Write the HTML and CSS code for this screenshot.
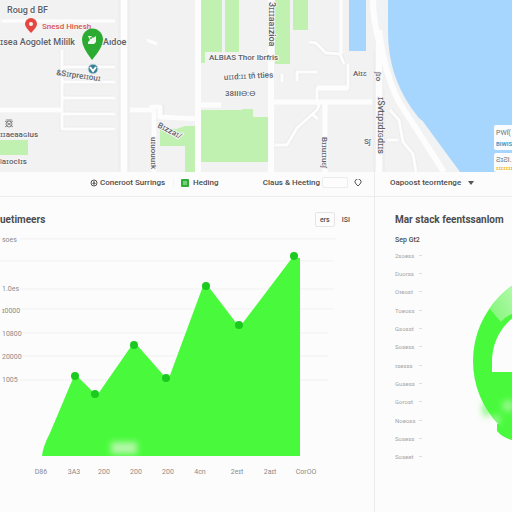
FILE: index.html
```html
<!DOCTYPE html>
<html lang="en">
<head>
<meta charset="utf-8">
<title>Dashboard</title>
<meta name="viewport" content="width=device-width, initial-scale=1">
<link rel="stylesheet" href="styles.css">
</head>
<body>
<div class="page">
  <section class="map" aria-label="Map">
    <svg class="map-canvas" viewBox="0 0 512 172" preserveAspectRatio="xMidYMid slice">
      <rect class="land" width="512" height="172"/>
      <g class="park">
        <path d="M201 0h21v52h-17v11h-4zM225 0h14v52h-14zM275 0h15v64h-15zM293 0h15v30h-15z"/>
        <path d="M201 110h40l2-1h10v8h15v45h-67zM160 127l16 2 9-3h10v46h-10v-26h-25z"/>
        <path d="M0 140h28v15H0z"/>
      </g>
      <g class="water">
        <path d="M349 0h17v51h-17z"/>
        <path d="M388 0H512V172H460L412 109Q388 75 388 32z"/>
      </g>
      <g class="casing">
        <path d="M62 50v79h53M62 67h53M62 82h53M62 98h53M62 114h53"/>
        <path d="M309 42l7 1 10 10 14 1 4 10M297 81v-9h20M340 88h8V64M317 105v-17h31M275 145h12l10-17 20-18 3-7M282 82v-8M313 115l5 4"/>
        <path d="M390 110l9 10 4 22 10 12 3 18M387 140h11"/>
        <path d="M0 110h62M132 110h21v-3h9v10l38 2M154 110v62"/>
      </g>
      <g class="road thin">
        <path d="M62 50v79h53M62 67h53M62 82h53M62 98h53M62 114h53M0 21h115M147 40l10 4"/>
        <path d="M309 42l7 1 10 10 14 1 4 10M297 81v-9h20M340 88h8V64M317 105v-17h31M275 145h12l10-17 20-18 3-7M282 82v-8M313 115l5 4M341 0v54"/>
        <path d="M390 110l9 10 4 22 10 12 3 18M387 140h11"/>
      </g>
      <g class="road mid">
        <path d="M0 110h62M130 110h22v-3h8v10l40 2M154 110v62M201 105h20M272 102h100M325 104v68M317 88h31"/>
      </g>
      <path class="road edge" d="M382 0q-2 50 10 82t28 42l35 48"/>
      <g class="road wide">
        <path d="M124 0v172M198 0v172M271 0v172"/>
        <path d="M373 0q0 20 6 42v130M379 30q5 42 20 72l45 70"/>
      </g>
      <path class="hairline" d="M119 0v172M129 0v172M374 50v122M384 90v82M0 21h2"/>
      <g class="map-text">
        <text x="7" y="13">Roug d BF</text>
        <text x="42" y="29" class="place">Snesd Hinesh</text>
        <text x="0" y="45">ɪsea Aogolet Mililk</text>
        <text x="103" y="45">Aıdoe</text>
        <text x="56" y="75" transform="rotate(8 56 75)" class="small">&amp;Sɪrpreɪɪouɪ</text>
        <text x="0" y="137" class="small">ɪɪaeaaɢius</text>
        <text x="0" y="164" class="small">ƖaɪocIɪs</text>
        <text x="209" y="60" class="small">ALBIAS Thor Ibrfris</text>
        <text x="224" y="80" class="small" transform="rotate(-3 224 80)">uɪɪd:ɪɪ tñ tties</text>
        <text x="225" y="96" class="small">38IIIƟ:Ɵ</text>
        <text x="157" y="127" class="small" transform="rotate(27 157 127)">Bɪzzaɪ/</text>
        <text x="353" y="76" class="small">Aƚɪɛ</text>
        <text x="364" y="144" class="small">Sʃ</text>
        <text x="151" y="137" class="small" transform="rotate(90 151 137)">uɪuouuɪk</text>
        <text x="269" y="2" transform="rotate(90 269 2)">3ɪɪɪaaɪzioa</text>
        <text x="322" y="137" class="small" transform="rotate(90 322 137)">Bɪɪuɪɪuɛʃ</text>
        <text x="376" y="72" class="small" transform="rotate(90 376 72)">ʃɪo</text>
        <text x="378" y="97" transform="rotate(90 378 97)">ɪSvtɪpɪdɪɢdɪɪs</text>
      </g>
      <g class="crest"><circle cx="9" cy="124" r="3"/><path d="M5 121l8 6M5 127l8-6M6 120h6"/></g>
      <path class="pin-red" d="M31 33q-6-6-6-9a6 6 0 0 1 12 0q0 3-6 9z"/>
      <circle class="pin-hole" cx="31" cy="24" r="2"/>
      <path class="pin-green" d="M92 60Q82 47 82 40a10 11 0 0 1 21 0Q103 47 92 60z"/>
      <path class="pin-mark" d="M88 36h3l2 2 3-2v6l-2 2h-6v-2l2-2z"/>
      <circle class="pin-dot" cx="91" cy="38" r="1"/>
      <circle class="poi" cx="93" cy="69" r="5"/>
      <path class="poi-mark" d="M90 67l3 4 3-4"/>
    </svg>
    <aside class="map-cards">
      <div class="map-card"><span>PWſ(</span><b class="blue">BIWIS</b></div>
      <div class="map-card"><span>ƧɪƧI.</span><b class="gold">ɪɪɪɪɪɪɪ</b></div>
    </aside>
  </section>

  <main class="dashboard">
    <section class="column">
      <nav class="toolbar">
        <button class="tool" type="button">
          <svg class="icon" viewBox="0 0 8 8"><circle class="ring" cx="4" cy="4" r="3"/><path class="ring" d="M4 2v2M3 4h2v1H3z"/></svg>
          Coneroot Surrings
        </button>
        <button class="tool divided" type="button">
          <svg class="icon" viewBox="0 0 8 8"><rect class="badge" width="8" height="8" rx="1"/><path class="badge-mark" d="M2 3h4M2 5h4"/></svg>
          Heding
        </button>
        <label class="tool search">Claus &amp; Heeting<input type="text"></label>
        <button class="tool locate" type="button" aria-label="Locate">
          <svg class="icon" viewBox="0 0 8 8"><path class="ring" d="M4 7L2 5a3 3 0 1 1 4 0z"/></svg>
        </button>
      </nav>
      <header class="panel-head">
        <h2>uetimeers</h2>
        <div class="range">
          <button class="range-button selected" type="button">ers</button>
          <button class="range-button" type="button">ISI</button>
        </div>
      </header>
      <svg class="chart" viewBox="0 0 374 250" role="img" aria-label="Area chart">
        <defs>
          <filter id="soft" x="-30%" y="-50%" width="160%" height="200%"><feGaussianBlur stdDeviation="3"/></filter>
          <clipPath id="areaClip"><path d="M42 222Q43 212 50 199L74 142L95 160L134 111L166 144L206 52L239 90L294 24H300V222z"/></clipPath>
        </defs>
        <path class="gridline" d="M20 5H336M0 27H334M20 55H334M20 75H334M20 99H328M20 122H328M20 146H328"/>
        <path class="area" d="M42 222Q43 212 50 199L74 142L77 142L95 160L98 160L132 111L137 111L166 144L169 144L203 52L208 52L237 90L242 90L292 24H300V222z"/>
        <g clip-path="url(#areaClip)"><rect class="glow" x="111" y="208" width="26" height="12" filter="url(#soft)"/></g>
        <g class="points">
          <circle cx="75" cy="142" r="4"/><circle cx="95" cy="160" r="4"/><circle cx="134" cy="111" r="4"/>
          <circle cx="166" cy="144" r="4"/><circle cx="206" cy="52" r="4"/><circle cx="239" cy="91" r="4"/><circle cx="294" cy="22" r="4"/>
        </g>
        <g class="axis">
          <text x="2" y="8">soes</text><text x="2" y="57">1.0es</text><text x="2" y="79">ɪ0000</text>
          <text x="2" y="102">10800</text><text x="2" y="125">20000</text><text x="2" y="148">1005</text>
        </g>
        <g class="axis ticks">
          <text x="41" y="240">D86</text><text x="74" y="240">3A3</text><text x="104" y="240">200</text>
          <text x="136" y="240">200</text><text x="168" y="240">200</text><text x="200" y="240">4cn</text>
          <text x="237" y="240">2eɪt</text><text x="270" y="240">2aɪt</text><text x="306" y="240">CorOO</text>
        </g>
      </svg>
    </section>

    <section class="column side">
      <nav class="toolbar side-toolbar">
        <select class="picker" aria-label="Category"><option>Oapoost teorntenge</option></select>
        <svg class="caret" viewBox="0 0 6 4"><path d="M0 0h6L3 4z"/></svg>
      </nav>
      <header class="panel-head side-head"><h2>Mar stack feentssanlom</h2></header>
      <div class="side-body">
        <div class="legend">
          <h3>Sep Gt2</h3>
          <ul>
            <li>2soess</li><li>Duorss</li><li>Oɪeost</li><li>Toeoss</li><li>Gsosst</li><li>Sosess</li>
            <li>ɪsesss</li><li>Gusess</li><li>Gorost</li><li>Noeoss</li><li>Sosess</li><li>Soseet</li>
          </ul>
        </div>
        <svg class="donut" viewBox="0 0 40 220" role="img" aria-label="Donut chart">
          <defs>
            <filter id="haze" x="-100%" y="-100%" width="300%" height="300%"><feGaussianBlur stdDeviation="3"/></filter>
            <linearGradient id="fade" x1="0" y1="1" x2="1" y2="0"><stop class="fade-start" offset="0"/><stop class="fade-end" offset="1"/></linearGradient>
            <clipPath id="ringShape"><circle cx="93" cy="115" r="92"/></clipPath>
          </defs>
          <ellipse class="ring-light" cx="15" cy="163" rx="5" ry="8" filter="url(#haze)"/>
          <circle class="ring-fill" cx="93" cy="115" r="92"/>
          <path class="ring-fill" d="M25 178h15v16q-9-2-15-9z"/>
          <path class="ring-hole" d="M20 126V115A55 55 0 0 1 75 60V126z"/>
          <g clip-path="url(#ringShape)">
            <path fill="url(#fade)" d="M17 62L29 76Q34 70 40 68V30z"/>
            <circle class="ring-light" cx="36" cy="160" r="6" filter="url(#haze)"/>
            <circle class="ring-light" cx="24" cy="174" r="5" filter="url(#haze)"/>
          </g>
        </svg>
      </div>
    </section>
  </main>
</div>
</body>
</html>
```

FILE: styles.css
```css
* { box-sizing: border-box; }

body {
  margin: 0;
  overflow-x: hidden;
  background: #fcfcfc;
  color: #4c4c4c;
  font-family: Roboto, "Liberation Sans", "DejaVu Sans", sans-serif;
}

button, input, select { font: inherit; color: inherit; }
h2, h3, ul { margin: 0; padding: 0; }

.page {
  display: flex;
  flex-direction: column;
  min-height: 100vh;
}

/* Map */
.map { position: relative; overflow: hidden; }
.map-canvas { display: block; width: 100%; }
.land { fill: #f3f2f2; }
.park { fill: #c0f1b0; }
.water { fill: #a6d5fd; }
.casing { fill: none; stroke: #ecebeb; stroke-width: 5; }
.road { fill: none; stroke: #fdfdfd; stroke-linejoin: round; }
.thin { stroke-width: 3; }
.mid { stroke-width: 5; }
.wide { stroke-width: 6; }
.edge { stroke: #f1f2f3; stroke-width: 8; }
.hairline { fill: none; stroke: #ebeaea; stroke-width: 1; }
.map-text {
  fill: #5c6067;
  font-size: 9px;
  font-weight: 500;
  stroke: #f6f6f6;
  stroke-width: 2px;
  paint-order: stroke;
}
.map-text .small { font-size: 8px; }
.map-text .place { fill: #d65353; font-size: 8px; }
.crest { fill: none; stroke: #858585; }
.pin-red { fill: #e64640; }
.pin-hole, .pin-mark { fill: #f0f8ee; }
.pin-green { fill: #2cab32; }
.pin-dot { fill: #2cab32; }
.poi { fill: #397f95; stroke: #d5e3e6; stroke-width: 1; }
.poi-mark { fill: none; stroke: #fff; stroke-width: 2; }

.map-cards {
  position: absolute;
  right: 0;
  bottom: 0;
  display: grid;
  gap: 3px;
  width: 18px;
}
.map-card {
  display: grid;
  height: 25px;
  padding: 3px 0 0 2px;
  overflow: hidden;
  border-radius: 2px 0 0 2px;
  background: #fafcfe;
  color: #69717a;
  font-size: 7px;
  line-height: 10px;
}
.map-card + .map-card { height: 19px; line-height: 8px; }
.map-card b { font-size: 6px; }
.map-card .blue { color: #4a9bc4; }
.map-card .gold { color: #f1bd35; }

/* Dashboard */
.dashboard {
  display: grid;
  flex: 1;
  grid-template-columns: 374fr 138fr;
}
.column { min-width: 0; }
.side { border-left: 1px solid #ececec; overflow: hidden; }

.toolbar {
  display: flex;
  align-items: center;
  height: 25px;
  padding: 0 12px 3px 90px;
  border-bottom: 1px solid #ececec;
  font-size: 8px;
  font-weight: 500;
  white-space: nowrap;
}
.tool {
  display: flex;
  align-items: center;
  gap: 2px;
  padding: 0;
  border: 0;
  background: none;
}
.divided {
  gap: 4px;
  margin-left: 8px;
  padding-left: 7px;
  border-left: 1px solid #f4f4f4;
}
.search { margin-left: auto; }
.search input {
  width: 26px;
  height: 11px;
  padding: 0 2px;
  border: 1px solid #ececec;
  border-radius: 2px;
  background: #fdfdfd;
}
.locate { margin-left: 6px; }
.icon { width: 8px; height: 8px; }
.ring { fill: none; stroke: #555; }
.badge { fill: #2fae35; }
.badge-mark { fill: none; stroke: #c5edc2; }

.side-toolbar { gap: 6px; padding-left: 15px; }
.picker {
  appearance: none;
  padding: 0;
  border: 0;
  background: none;
}
.caret { width: 6px; height: 4px; fill: #555; }

.panel-head {
  display: flex;
  align-items: center;
  justify-content: space-between;
  height: 37px;
  padding: 8px 24px 0 0;
}
h2 { font-size: 10px; font-weight: 700; line-height: 16px; white-space: nowrap; }
.side-head { padding-left: 20px; padding-right: 0; }
.range { display: flex; gap: 7px; }
.range-button {
  height: 15px;
  padding: 0;
  border: 0;
  background: none;
  font-size: 7px;
  font-weight: 500;
}
.selected {
  width: 20px;
  border: 1px solid #e5e5e5;
  border-radius: 2px;
}

/* Area chart */
.chart { display: block; width: 100%; }
.gridline { fill: none; stroke: #f1f1f1; }
.area { fill: #48fa3b; }
.glow { fill: #b5f8a9; }
.points { fill: #1cc91f; }
.axis { fill: #8b8b8b; font-size: 7px; }
.ticks { text-anchor: middle; }

/* Side panel */
.side-body { display: flex; }
.legend { flex: 1; padding-left: 20px; }
h3 { font-size: 7px; font-weight: 500; line-height: 12px; }
.legend ul {
  display: grid;
  grid-auto-rows: 1fr;
  height: 220px;
  list-style: none;
}
.legend li {
  display: flex;
  align-items: center;
  justify-content: space-between;
  width: 26px;
  color: #a4a4a4;
  font-size: 6px;
}
.legend li::after {
  content: "";
  flex: none;
  width: 3px;
  height: 1px;
  margin-right: -1px;
  background: #ddd;
}
.donut { flex: none; width: 40px; height: 220px; margin-top: 12px; }
.ring-fill { fill: #48fa3b; }
.ring-hole { fill: #fcfcfc; }
.ring-light { fill: #98f88e; }
.fade-start { stop-color: #7df673; }
.fade-end { stop-color: #b9f9b2; }
```
